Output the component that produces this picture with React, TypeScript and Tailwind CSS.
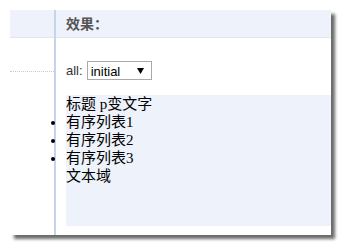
export default function App() {
  return (
    <div className="w-[342px] h-[246px] bg-white pt-[10px] pl-[10px]">
      <div className="flex w-[321px] h-[225px] bg-white shadow-[4px_4px_3px_#6b6b6b]">
        {/* left column */}
        <div className="w-[44px] flex flex-col">
          <div className="h-[28px] bg-[#eef2fa] border-b border-[#e3e6ec]"></div>
          <div className="h-[34px] border-b border-dotted border-[#c8c8c8]"></div>
        </div>

        {/* result column */}
        <div className="flex-1 flex flex-col border-l-2 border-[#c5d3ec]">
          <div className="h-[28px] bg-[#eef2fa] border-b border-[#e3e6ec] pl-[10px] flex items-center">
            <span className="text-[14px] font-bold text-[#555] font-['Noto_Sans_CJK_SC',sans-serif]">
              效果：
            </span>
          </div>

          <div className="pl-[10px] pt-[23px] flex items-center font-['Liberation_Sans',Arial,sans-serif] text-[13px] text-[#333]">
            <span className="mr-[4px]">all:</span>
            <select
              defaultValue="initial"
              className="w-[65px] h-[19px] border border-[#a9a9a9] bg-white text-[13px] text-black pl-[3px] appearance-none rounded-none"
              style={{
                backgroundImage:
                  "url(\"data:image/svg+xml;utf8,<svg xmlns='http://www.w3.org/2000/svg' width='7' height='6'><path d='M0 0h7L3.5 6z' fill='black'/></svg>\")",
                backgroundRepeat: "no-repeat",
                backgroundPosition: "right 7px center",
              }}
            >
              <option value="initial">initial</option>
            </select>
          </div>

          <div className="ml-[10px] mt-[14px] h-[131px] bg-[#eef2fa] text-[15px] leading-[18px] text-black font-['Liberation_Serif','Noto_Sans_CJK_SC',serif]">
            <div>标题 p变文字</div>
            <ul className="list-disc ml-[-14px] pl-[14px]">
              <li>有序列表1</li>
              <li>有序列表2</li>
              <li>有序列表3</li>
            </ul>
            <div>文本域</div>
          </div>
        </div>
      </div>
    </div>
  );
}
